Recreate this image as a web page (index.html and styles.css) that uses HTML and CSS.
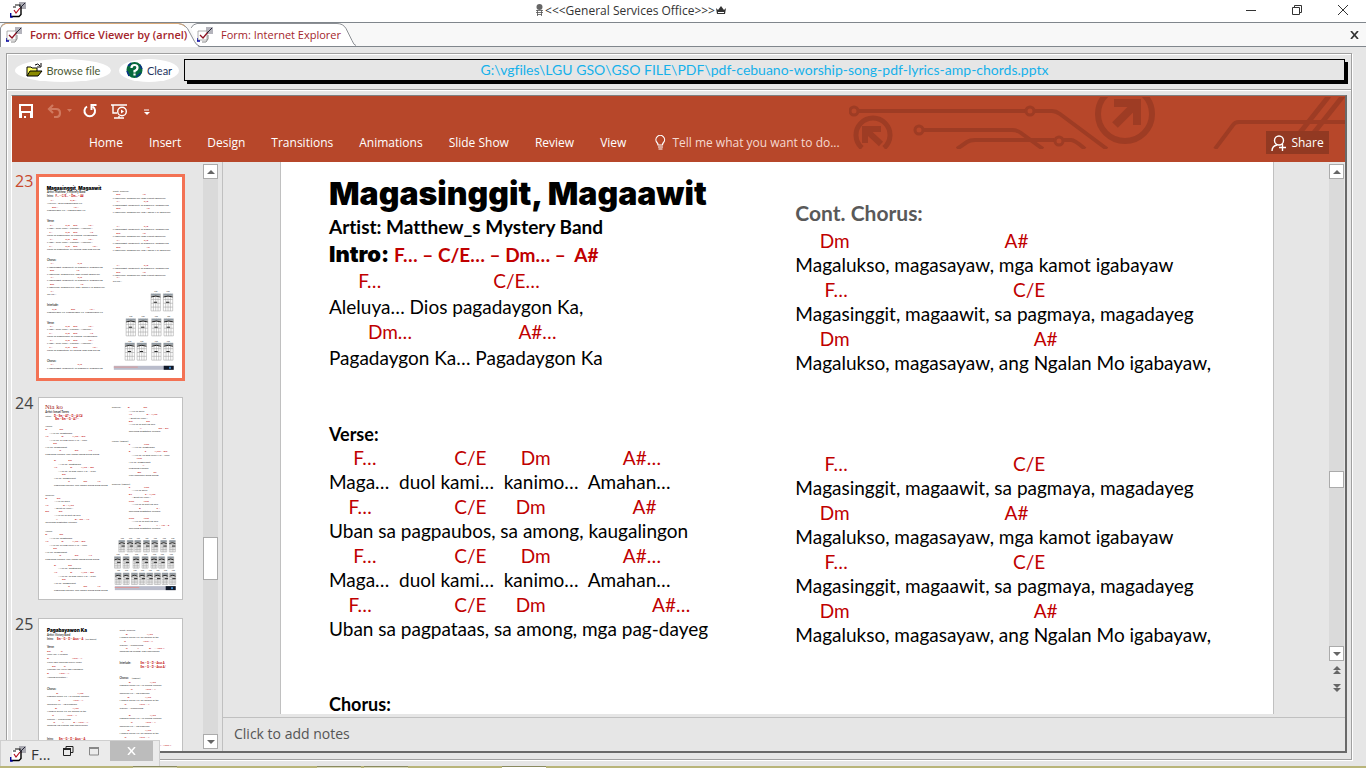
FILE: index.html
```html
<!DOCTYPE html>
<html lang="en">
<head>
    <meta charset="UTF-8">
    <meta name="viewport" content="width=device-width, initial-scale=1.0">
    <title>General Services Office</title>
    <link rel="stylesheet" href="styles.css">
</head>
<body>
    <svg width="0" height="0" class="defs">
        <symbol id="form-icon" viewBox="0 0 16 16">
            <path d="M9 0h7v7h-7z" fill="#b4b4bc"/>
            <path d="M1 4h9v9H1z" fill="#fff" stroke="#999" stroke-width=".8"/>
            <path d="M0 11v3h3" stroke="#00009c" stroke-width="1.4" fill="none"/>
            <path d="M5 15h4l2-3V8" stroke="#888" stroke-width="1" fill="none"/>
            <path d="M3 8l3 3 5-6" stroke="#8e1020" stroke-width="1.300" fill="none"/>
            <path d="M10 6l5-5" stroke="#223" stroke-width="1"/>
        </symbol>
        <symbol id="form-icon-dark" viewBox="0 0 16 16">
            <path d="M9 0h7v7h-7z" fill="#a8a8b0"/>
            <path d="M2 4h8v10H2z" fill="#fff"/>
            <path d="M5 3h5v2M3 5h3" stroke="#111" stroke-width="1.200" fill="none"/>
            <path d="M1 14.500h8l2-2V5" stroke="#000" stroke-width="1.400" fill="none"/>
            <path d="M.7 11v4h2" stroke="#00009c" stroke-width="1.400" fill="none"/>
            <path d="M4 8l2 3 4-5" stroke="#b01020" stroke-width="1.200" fill="none"/>
            <path d="M10 6l5-5" stroke="#223" stroke-width="1"/>
        </symbol>
    </svg>

    <header class="titlebar">
        <svg class="icon16"><use href="#form-icon-dark"/></svg>
        <h1>
            <svg width="9" height="12" viewBox="0 0 9 12"><circle cx="4.500" cy="3" r="3" fill="#666"/><path d="M1 6.500h7M1 8.500h7M2.500 6v6M6.500 6v6M2 10.500h5" stroke="#555" stroke-width=".8" fill="none"/></svg>
            <span>&lt;&lt;&lt;General Services Office&gt;&gt;&gt;</span>
            <svg width="10" height="9" viewBox="0 0 10 9"><path d="M0 2l2 2 3-4 3 4 2-2-1 6H1z" fill="#333"/><path d="M2 6.500h6" stroke="#fff"/></svg>
        </h1>
        <div class="win-buttons">
            <button aria-label="Minimize"><svg width="11" height="11"><path d="M0 5.500h10" stroke="#333"/></svg></button>
            <button aria-label="Restore"><svg width="11" height="11"><path d="M.5 2.500h7v7h-7zM2.500 2.500v-2h7v7h-2" stroke="#333" fill="none"/></svg></button>
            <button aria-label="Close"><svg width="11" height="11"><path d="M0 0l10 10M10 0L0 10" stroke="#333"/></svg></button>
        </div>
    </header>

    <nav class="doc-tabs">
        <a href="#" class="doc-tab active">
            <svg class="tab-shape" width="200" height="24"><path d="M0 24V4q1-3 5-3.500h173q6 .500 9 5l7 13q2 4 5 5.500z" fill="#fff"/><path d="M.5 24V5q1-4 5-4.500h173q6 .500 9 5l7 13q2 4 5 4.500" fill="none" stroke="#8c8f94"/><path d="M2 3.500q1-2.500 4-3h172q4 0 7 3" fill="none" stroke="#d8a878"/></svg>
            <svg class="icon16"><use href="#form-icon"/></svg>
            <span>Form: Office Viewer by (arnel)</span>
        </a>
        <a href="#" class="doc-tab">
            <svg class="tab-shape" width="166" height="24"><path d="M0 5q2-4 6-4.500h140q6 0 9 5l6 12q2 5 4 5.500H8z" fill="#fff"/><path d="M0 5q2-4 6-4.500h140q6 0 9 5l6 12q2 5 4 5" fill="none" stroke="#8c8f94"/></svg>
            <svg class="icon16"><use href="#form-icon"/></svg>
            <span>Form: Internet Explorer</span>
        </a>
        <button class="tab-close" aria-label="Close form"><svg width="9" height="8"><path d="M1 0l7 8M8 0L1 8" stroke="#333" stroke-width="1.700"/></svg></button>
    </nav>

    <main class="form">
        <section class="form-header">
            <button class="pill browse">
                <svg width="17" height="15" viewBox="0 0 17 15"><path d="M1 13V4h4l1 1h5v3" fill="#ffff66" stroke="#000"/><path d="M1 13l3-5h12l-4 5z" fill="#8a8a00" stroke="#000"/><path d="M9 2q3-2.500 5 1M15 0v4h-4" fill="none" stroke="#000"/></svg>
                <span>Browse file</span>
            </button>
            <button class="pill clear">
                <svg width="17" height="17" viewBox="0 0 17 17"><circle cx="8.500" cy="8" r="8" fill="#066a3c"/><path d="M2 4l3-3M1 9l2 5M10 15l5-4M14 3l2 4" stroke="#0a2f8a" stroke-width="1.500"/><path d="M5.500 6q0-3 3-3t3 2.500-3 3.500v1.500M8.500 11.500v2" stroke="#fff" stroke-width="2.200" fill="none"/></svg>
                <span>Clear</span>
            </button>
            <output class="path">G:\vgfiles\LGU GSO\GSO FILE\PDF\pdf-cebuano-worship-song-pdf-lyrics-amp-chords.pptx</output>
        </section>

        <section class="form-detail">
            <div class="office">
                <div class="ribbon">
                    <svg class="circuit" width="496" height="52" viewBox="0 0 496 52" fill="none" stroke="#9e3c24" stroke-width="4">
                        <circle cx="5" cy="14" r="4" stroke-width="3"/><path d="M9 14h168"/>
                        <circle cx="181" cy="14" r="4" stroke-width="3"/><path d="M185 14h18q4 0 8 3l47 35"/>
                        <circle cx="70" cy="33" r="4" stroke-width="3"/><path d="M74 33h89q5 0 9 3l22 16"/>
                        <path d="M108 52l10-7q3-2 8-2h79"/><circle cx="210" cy="44" r="4" stroke-width="3"/><path d="M214 43h8q4 0 14 9"/>
                        <path d="M13 51a17 17 0 1 1 22 0" stroke-width="5"/><path d="M16 46V32h16M17 33l15 14" stroke-width="6"/>
                        <circle cx="276" cy="17" r="27" stroke-width="6"/><path d="M265 6h23v22M287 7L266 28" stroke-width="8"/>
                        <path d="M366 52l18-24q2-3 6-3h106" /><path d="M480 -1L438 52M494 -1L452 52" stroke-width="5"/>
                    </svg>
                    <div class="quick">
                        <button aria-label="Save"><svg width="14" height="14"><path d="M0 0h14v14H0zM2 2v5h10V2zM3 9v5h2v-2h2v2h4V9z" fill="#fff" fill-rule="evenodd"/></svg></button>
                        <button aria-label="Undo" class="undo"><svg width="26" height="14" fill="none" stroke="#d0795f" stroke-width="2.200"><path d="M6 1L2 5l4 4M2 5h7q4 0 4 4t-4 4H7"/><path d="M20 5h5l-2.500 3z" fill="#d0795f" stroke="none"/></svg></button>
                        <button aria-label="Repeat"><svg width="14" height="14" fill="none" stroke="#fff" stroke-width="2"><path d="M4 2.500a5.300 5.300 0 1 0 5.500 0"/><path d="M8.500 6V1h5"/></svg></button>
                        <button aria-label="Start slide show" class="show"><svg width="17" height="15" fill="none" stroke="#fff" stroke-width="1.400"><path d="M0 1h16M2 1v8h4M3 14h10M8 12v2"/><circle cx="11" cy="7.500" r="4.300"/><path d="M10 5.500l3 2-3 2z" fill="#fff" stroke="none"/></svg></button>
                        <button aria-label="Customize" class="more"><svg width="6" height="7"><path d="M0 1h5" stroke="#fff"/><path d="M0 3h6L3 6z" fill="#fff"/></svg></button>
                    </div>
                    <div class="menu">
                        <button>Home</button>
                        <button>Insert</button>
                        <button>Design</button>
                        <button>Transitions</button>
                        <button>Animations</button>
                        <button>Slide Show</button>
                        <button>Review</button>
                        <button>View</button>
                        <button class="tell"><svg width="11" height="15" fill="none" stroke="#fff" stroke-width="1.200"><path d="M3 10Q3 8.500 2 7.500a4.300 4.300 0 1 1 6.500 0Q7.500 8.500 7.500 10zM3 12h5M3.500 14h4"/></svg>Tell me what you want to do...</button>
                        <button class="share"><svg width="16" height="16" fill="none" stroke="#fff" stroke-width="1.400"><circle cx="8" cy="5.500" r="4.500"/><path d="M1 16q0-5 5-6M8 12.500h7M11.500 9v7"/></svg>Share</button>
                    </div>
                </div>

                <div class="workspace">
                    <aside class="thumbs">
                        <a href="#" class="thumb selected"><b>23</b><svg id="thumb23" viewBox="117 36 430 603" height="201"></svg></a>
                        <a href="#" class="thumb"><b>24</b><svg id="thumb24" viewBox="117 39 430 603" height="201"></svg></a>
                        <a href="#" class="thumb"><b>25</b><svg id="thumb25" viewBox="117 56 430 603" height="201"></svg></a>
                    </aside>
                    <div class="scroll side-scroll">
                        <button aria-label="Scroll thumbnails up"><i class="up"></i></button>
                        <div class="track"><div class="knob"></div></div>
                        <button aria-label="Scroll thumbnails down"><i class="down"></i></button>
                    </div>

                    <div class="editor">
                        <div class="stage">
                            <article class="slide">
                                <div class="col first">
                                    <h2>Magasinggit, Magaawit</h2>
                                    <p class="artist">Artist: Matthew_s Mystery Band</p>
                                    <p class="intro"><strong>Intro:</strong> F… – C/E… – Dm… –  A#</p>
                                    <p class="chords wide">      F…                       C/E…</p>
                                    <p>Aleluya… Dios pagadaygon Ka,</p>
                                    <p class="chords wide">        Dm…                      A#…</p>
                                    <p class="wide">Pagadaygon Ka… Pagadaygon Ka</p>
                                    <h3>Verse:</h3>
                                    <p class="chords">     F…                C/E       Dm               A#…</p>
                                    <p>Maga…  duol kami…  kanimo…  Amahan…</p>
                                    <p class="chords">    F…                 C/E      Dm                  A#</p>
                                    <p>Uban sa pagpaubos, sa among, kaugalingon</p>
                                    <p class="chords">     F…                C/E       Dm               A#…</p>
                                    <p>Maga…  duol kami…  kanimo…  Amahan…</p>
                                    <p class="chords">    F…                 C/E      Dm                      A#…</p>
                                    <p>Uban sa pagpataas, sa among, mga pag-dayeg</p>
                                    <h3>Chorus:</h3>
                                </div>
                                <div class="col second">
                                    <h2>Cont. Chorus:</h2>
                                    <p class="chords">     Dm                                A#</p>
                                    <p>Magalukso, magasayaw, mga kamot igabayaw</p>
                                    <p class="chords">      F…                                  C/E</p>
                                    <p>Magasinggit, magaawit, sa pagmaya, magadayeg</p>
                                    <p class="chords">     Dm                                      A#</p>
                                    <p>Magalukso, magasayaw, ang Ngalan Mo igabayaw,</p>
                                    <p class="chords repeat">      F…                                  C/E</p>
                                    <p>Magasinggit, magaawit, sa pagmaya, magadayeg</p>
                                    <p class="chords">     Dm                                A#</p>
                                    <p>Magalukso, magasayaw, mga kamot igabayaw</p>
                                    <p class="chords">      F…                                  C/E</p>
                                    <p>Magasinggit, magaawit, sa pagmaya, magadayeg</p>
                                    <p class="chords">     Dm                                      A#</p>
                                    <p>Magalukso, magasayaw, ang Ngalan Mo igabayaw,</p>
                                </div>
                            </article>
                            <div class="scroll main-scroll">
                                <button aria-label="Scroll up"><i class="up"></i></button>
                                <div class="track"><div class="knob"></div></div>
                                <button aria-label="Scroll down"><i class="down"></i></button>
                                <button class="page" aria-label="Previous slide"><i class="up"></i><i class="up"></i></button>
                                <button class="page" aria-label="Next slide"><i class="down"></i><i class="down"></i></button>
                            </div>
                        </div>
                        <div class="notes">Click to add notes</div>
                    </div>
                </div>
            </div>
        </section>
    </main>

    <footer class="taskbar"><span></span><span class="pinned"></span><span></span><span class="current"></span></footer>

    <div class="mini-window">
        <svg class="icon16"><use href="#form-icon-dark"/></svg>
        <span>F...</span>
        <button aria-label="Restore window"><svg width="11" height="11"><path d="M.5 3h7v6.500h-7zM3 2.500v-2h7v6h-2" stroke="#222" fill="none"/><path d="M0 3h8" stroke="#222" stroke-width="2"/></svg></button>
        <button aria-label="Maximize window"><svg width="11" height="9"><path d="M.5 1h9v7h-9z" stroke="#888" fill="none"/><path d="M0 1h10" stroke="#888" stroke-width="2"/></svg></button>
        <button class="mini-close" aria-label="Close window"><svg width="9" height="8"><path d="M1 0l7 8M8 0L1 8" stroke="#fff" stroke-width="1.500"/></svg></button>
    </div>

    <script src="thumbs.js"></script>
</body>
</html>
```
FILE: styles.css
```css
* {
    box-sizing: border-box;
}
body {
    margin: 0;
    height: 100vh;
    display: flex;
    flex-direction: column;
    overflow: hidden;
    position: relative;
    background: #e6e6e6;
    color: #333;
    font: 12px "Open Sans", "Noto Sans", sans-serif;
}
button {
    border: none;
    background: none;
    padding: 0;
    margin: 0;
    font: inherit;
    color: inherit;
    display: flex;
    align-items: center;
    justify-content: center;
}
a {
    color: inherit;
    text-decoration: none;
}
h1, h2, h3, p {
    margin: 0;
}
svg {
    display: block;
    flex: none;
}
.defs {
    position: absolute;
}
.icon16 {
    width: 16px;
    height: 16px;
}

/* title bar */
.titlebar {
    height: 22px;
    flex: none;
    display: grid;
    grid-template-columns: 1fr auto 1fr;
    align-items: center;
    background: #fff;
    padding: 0 17px 2px 10px;
}
.titlebar h1 {
    display: flex;
    align-items: center;
    gap: 1px;
    margin-right: 98px;
    font-size: 12px;
    font-weight: normal;
}
.win-buttons {
    display: flex;
    justify-content: flex-end;
    gap: 35px;
}

/* form tabs */
.doc-tabs {
    height: 25px;
    flex: none;
    display: flex;
    background: #f8f8f8;
    border-top: 1px solid #80868c;
    border-bottom: 1px solid #80868c;
    color: #a4262c;
    font-size: 11px;
}
.doc-tab {
    position: relative;
    z-index: 0;
    display: flex;
    align-items: center;
    gap: 8px;
    width: 191px;
    height: 23px;
    padding-left: 6px;
    white-space: nowrap;
}
.doc-tab.active {
    z-index: 1;
    font-weight: 600;
}
.tab-shape {
    position: absolute;
    left: 0;
    top: 0;
    z-index: -1;
}
.tab-close {
    margin-left: auto;
    padding-right: 7px;
}

/* form frame */
.form {
    flex: 1;
    min-height: 0;
    display: flex;
    flex-direction: column;
    margin: 6px 14px 6px 6px;
    border: 1px solid #a0a0a0;
    box-shadow: 1px 1px 0 #fff, inset 1px 1px 0 #fff;
}
.form-header {
    height: 36px;
    flex: none;
    display: flex;
    align-items: flex-start;
    gap: 8px;
    padding: 5px 6px 0 8px;
    border-bottom: 1px solid #a0a0a0;
}
.pill {
    height: 23px;
    border-radius: 50%;
    background: #fff;
    gap: 4px;
    font-family: Lato, sans-serif;
    font-size: 11px;
    font-variant-ligatures: none;
}
.browse {
    width: 96px;
    color: #4b5a35;
}
.clear {
    width: 60px;
    margin-right: -3px;
    color: #23345e;
}
.path {
    flex: 1;
    height: 22px;
    border: 1px solid #000;
    box-shadow: 3px 3px 0 #000;
    color: #16b1ea;
    font: 14px/19px Lato, sans-serif;
    font-variant-ligatures: none;
    text-align: center;
    white-space: nowrap;
    overflow: hidden;
}
.form-detail {
    flex: 1;
    min-height: 0;
    display: flex;
    padding: 3px 4px 6px 3px;
    border-top: 1px solid #fff;
}

/* presentation viewer */
.office {
    flex: 1;
    min-width: 0;
    display: flex;
    flex-direction: column;
    border: 2px solid #696969;
    border-top: 1px solid #808080;
    border-left: 1px solid #fff;
    margin: 1px 0 0 1px;
}
.ribbon {
    position: relative;
    height: 66px;
    flex: none;
    background: #b7472a;
    color: #fff;
    overflow: hidden;
}
.circuit {
    position: absolute;
    right: 0;
    top: 1px;
}
.quick {
    display: flex;
    align-items: center;
    height: 30px;
    padding-left: 7px;
}
.undo {
    margin-left: 14px;
}
.quick .undo + button {
    margin-left: 10px;
}
.show {
    margin-left: 14px;
}
.more {
    margin: 3px 0 0 16px;
}
.menu {
    position: relative;
    display: flex;
    align-items: center;
    gap: 26px;
    height: 33px;
    padding-left: 77px;
    white-space: nowrap;
}
.tell {
    gap: 6px;
    margin-left: 3px;
    color: #f6d9d0;
}
.share {
    width: 63px;
    height: 23px;
    gap: 4px;
    margin-left: auto;
    margin-right: 16px;
    background: #923922;
}
.workspace {
    flex: 1;
    min-height: 0;
    display: flex;
}
.thumbs {
    width: 191px;
    flex: none;
    display: flex;
    flex-direction: column;
    gap: 18px;
    padding: 12px 0 0 3px;
    overflow: hidden;
}
.thumb {
    display: flex;
    align-items: flex-start;
    flex: none;
}
.thumb b {
    width: 23px;
    font-size: 16px;
    line-height: 12px;
    font-weight: normal;
    color: #444;
}
.thumb svg {
    width: 145px;
    height: 203px;
    background: #fff;
    border: 1px solid #c0c0c0;
}
.thumb.selected b {
    line-height: 14px;
    color: #c8482c;
}
.thumb.selected svg {
    width: 149px;
    height: 207px;
    margin: 0 0 -2px -2px;
    border: 3px solid #f37254;
}
.thumb text {
    font: 8px Lato, sans-serif;
    fill: #333;
    white-space: pre;
}
.thumb .red {
    fill: #c00000;
}
.thumb .head {
    font: 900 14px Inter, sans-serif;
    fill: #000;
}
.thumb .serif {
    font: 20px "Liberation Serif", serif;
    fill: #a02020;
}
.thumb .bold {
    font-weight: bold;
}
.thumb .label {
    font-size: 7px;
}

/* scrollbars */
.scroll {
    width: 15px;
    flex: none;
    display: flex;
    flex-direction: column;
}
.scroll button {
    height: 15px;
    flex: none;
    border: 1px solid #ababab;
    background: #fff;
}
.scroll .track {
    flex: 1;
    display: flex;
    flex-direction: column;
    background: #dadada;
}
.knob {
    border: 1px solid #ababab;
    background: #fff;
}
.side-scroll {
    padding: 2px 0;
}
.side-scroll .knob {
    height: 43px;
    margin-top: 358px;
}
.main-scroll {
    padding: 2px 0 17px;
}
.main-scroll .knob {
    height: 17px;
    margin-top: 292px;
}
.scroll i {
    border: 4px solid transparent;
}
.scroll .up {
    border-top: none;
    border-bottom-color: #666;
}
.scroll .down {
    border-bottom: none;
    border-top-color: #666;
}
.scroll .page {
    flex-direction: column;
    height: 18px;
    border: none;
    background: none;
}

/* slide */
.editor {
    flex: 1;
    min-width: 0;
    display: flex;
    flex-direction: column;
    margin-left: 4px;
    border-left: 1px solid #c0c0c0;
}
.stage {
    flex: 1;
    min-height: 0;
    display: flex;
    gap: 55px;
    padding: 0 1px 3px 57px;
}
.slide {
    flex: 1;
    min-width: 0;
    display: grid;
    grid-template-columns: 49.4% 50.6%;
    padding-left: 48px;
    overflow: hidden;
    background: #fff;
    border: 1px solid #c0c0c0;
    border-width: 0 1px;
    color: #000;
    font: 19px/24px Lato, sans-serif;
    font-variant-ligatures: none;
}
.slide p {
    height: 25px;
    white-space: pre;
}
.slide .chords {
    height: 24px;
    color: #c00000;
}
.first {
    padding-top: 12px;
}
.first h2 {
    height: 41px;
    font: 900 32px/40px Inter, "Lato Black", sans-serif;
}
.slide .artist {
    height: 26px;
    font-weight: bold;
}
.slide .intro {
    height: 28px;
    line-height: 28px;
    color: #c00000;
    font-weight: bold;
}
.intro strong {
    color: #000;
    font: 900 22px Inter, "Lato Black", sans-serif;
}
.slide .wide {
    height: 26px;
}
.slide h3 {
    height: 24px;
    margin-top: 50px;
    font-size: 18px;
}
.second {
    padding-top: 39px;
}
.second h2 {
    height: 28px;
    color: #595959;
    font-size: 21px;
}
.slide .repeat {
    margin-top: 76px;
}
.notes {
    height: 34px;
    flex: none;
    padding-left: 11px;
    border-top: 1px solid #c0c0c0;
    color: #555;
    font-size: 14px;
    line-height: 32px;
}

/* bottom edge */
.taskbar {
    display: flex;
    gap: 3px;
    height: 2px;
    flex: none;
    padding-left: 133px;
    background: #b9b57a;
}
.taskbar span {
    width: 44px;
    background: #d8d8b8;
    border-top: 1px solid #8a8a60;
}
.taskbar .pinned {
    margin-left: 137px;
}
.taskbar .current {
    margin-left: 91px;
    background: #fff;
}
.mini-window {
    position: absolute;
    left: 0;
    bottom: 2px;
    width: 160px;
    height: 26px;
    display: flex;
    align-items: center;
    padding-left: 9px;
    background: #ebebeb;
    border: 1px solid #cfcfcf;
    border-bottom: none;
    font-size: 15px;
}
.mini-window span {
    width: 34px;
    padding-left: 5px;
}
.mini-window button {
    width: 27px;
    height: 20px;
    align-self: flex-start;
    padding-right: 6px;
}
.mini-window .mini-close {
    width: 45px;
    padding-right: 0;
    margin-left: auto;
    margin-right: 6px;
    background: #bcbcbc;
}
```
FILE: thumbs.js
```js
const NS = "http://www.w3.org/2000/svg";

function add(svg, tag, attrs, text) {
    const el = document.createElementNS(NS, tag);
    for (const key in attrs) el.setAttribute(key, attrs[key]);
    if (text) el.textContent = text;
    svg.appendChild(el);
}

// each row: x, middle of the line, text, class
function drawRows(svg, rows) {
    rows.forEach(r => add(svg, "text", { x: r[0], y: r[1] + 3, class: r[3] || "" }, r[2]));
}

function drawChordBox(svg, x, y, w, h) {
    add(svg, "rect", { x: x, y: y, width: w, height: 6, fill: "#8d9aa5" });
    let d = "";
    for (let i = 0; i <= 4; i++) d += `M${x + i * w / 4} ${y}v${h}`;
    for (let i = 0; i <= 4; i++) d += `M${x} ${y + 6 + i * (h - 6) / 4}h${w}`;
    add(svg, "path", { d: d, stroke: "#999", "stroke-width": 1.5, fill: "none" });
    add(svg, "path", { d: `M${x} ${y + 10}q${w / 2}-5 ${w} 0M${x + 8} ${y + h / 2}h10`, stroke: "#222", "stroke-width": 3, fill: "none" });
    add(svg, "text", { x: x + w / 3, y: y - 4, class: "label" }, "Fm");
}

function drawBanner(svg, x, y, w) {
    add(svg, "rect", { x: x, y: y, width: w, height: 12, fill: "#b9bccb" });
    add(svg, "path", { d: `M${x} ${y + 4}h${w * .4}`, stroke: "#d99", "stroke-width": 3 });
    add(svg, "rect", { x: x + w - 30, y: y, width: 30, height: 12, fill: "#101828" });
    add(svg, "rect", { x: x + w - 14, y: y + 3, width: 6, height: 6, fill: "#3b82c4" });
}

const t23 = document.getElementById("thumb23");
const praise = "Magasinggit, magaawit, sa pagmaya, magadayeg";
const dance = "Magalukso, magasayaw, mga kamot igabayaw";
const danceEnd = "Magalukso, magasayaw, ang Ngalan Mo igabayaw,";
drawRows(t23, [
    [140, 70, "Magasinggit, Magaawit", "head"],
    [141, 81, "Artist: Matthew_s Mystery Band", "bold"],
    [141, 93, "Intro:", "bold"], [167, 93, "F… – C/E… – Dm… – A#", "red bold"],
    [152, 104, "F…", "red"], [210, 104, "C/E…", "red"],
    [141, 115, "Aleluya… Dios pagadaygon Ka,"],
    [156, 126, "Dm…", "red"], [221, 126, "A#…", "red"],
    [141, 135, "Pagadaygon Ka… Pagadaygon Ka"],
    [141, 168, "Verse:", "bold"],
    [141, 285, "Chorus:", "bold"],
    [152, 295, "F…", "red"], [233, 295, "C/E", "red"], [141, 306, praise],
    [150, 316, "Dm", "red"], [229, 316, "A#", "red"], [141, 327, dance],
    [152, 336, "F…", "red"], [233, 336, "C/E", "red"], [141, 346, praise],
    [150, 357, "Dm", "red"], [241, 357, "A#", "red"], [141, 367, danceEnd],
    [152, 379, "F…", "red"], [141, 387, "Oh ho…"],
    [141, 420, "Interlude:", "bold"],
    [156, 432, "C/E", "red"], [213, 432, "Dm", "red"], [269, 432, "A#…", "red"],
    [141, 441, "Pagadaygon Ka, Pagadaygon Ka, Pagadaygon Ka"],
    [141, 474, "Verse:", "bold"],
    [141, 588, "Chorus:", "bold"],
    [152, 597, "F…", "red"], [233, 597, "C/E", "red"], [141, 609, praise],
    [339, 77, "Cont. Chorus:"],
    [349, 87, "Dm", "red"], [428, 87, "A#", "red"], [339, 99, dance],
    [351, 108, "F…", "red"], [432, 108, "C/E", "red"], [339, 120, praise],
    [349, 129, "Dm", "red"], [440, 129, "A#", "red"], [339, 141, danceEnd],
    [351, 183, "F…", "red"], [432, 183, "C/E", "red"], [339, 192, praise],
    [349, 204, "Dm", "red"], [428, 204, "A#", "red"], [339, 213, dance],
    [351, 225, "F…", "red"], [432, 225, "C/E", "red"], [339, 235, praise],
    [349, 246, "Dm", "red"], [440, 246, "A#", "red"], [339, 255, danceEnd],
    [351, 300, "F…", "red"], [432, 300, "C/E", "red"], [339, 309, praise],
    [349, 320, "Dm", "red"], [428, 320, "A#", "red"], [339, 330, dance],
    [351, 337, "F…", "red"], [339, 348, "Oh ho…"]
]);
[180, 484].forEach(y => {
    drawRows(t23, [
        [150, y, "F…", "red"], [196, y, "C/E", "red"], [220, y, "Dm", "red"], [265, y, "A#…", "red"],
        [141, y + 9, "Maga… duol kami… kanimo… Amahan…"],
        [148, y + 21, "F…", "red"], [196, y + 21, "C/E", "red"], [220, y + 21, "Dm", "red"], [270, y + 21, "A#", "red"],
        [141, y + 30, "Uban sa pagpaubos, sa among, kaugalingon"],
        [150, y + 42, "F…", "red"], [196, y + 42, "C/E", "red"], [220, y + 42, "Dm", "red"], [265, y + 42, "A#…", "red"],
        [141, y + 51, "Maga… duol kami… kanimo… Amahan…"],
        [148, y + 63, "F…", "red"], [196, y + 63, "C/E", "red"], [220, y + 63, "Dm", "red"], [278, y + 63, "A#…", "red"],
        [141, y + 72, "Uban sa pagpataas, sa among, mga pag-dayeg"]
    ]);
});
[[454, 386], [491, 386], [379, 461], [416, 461], [456, 461], [493, 461], [376, 534], [412, 534], [456, 534], [492, 534]]
    .forEach(b => drawChordBox(t23, b[0], b[1], 28, 52));
drawBanner(t23, 342, 603, 180);

const t24 = document.getElementById("thumb24");
drawRows(t24, [
    [135, 69, "Nia ko", "serif"],
    [136, 81, "Artist: Ismael Torres", "bold"],
    [136, 93, "Intro:"], [162, 93, "D – Em – A7 – D – A/C#", "red bold"],
    [166, 102, "Bm – Em – G – A7 –", "red bold"],
    [136, 330, "Chorus:"],
    [136, 339, "D              Em", "red"], [163, 348, "…Nia ko paila"],
    [136, 360, "A7                     D – A/C#", "red"], [163, 369, "…Buot ko ikaw…"],
    [136, 378, "Bm              Em", "red"], [163, 390, "…Nia ko sa pait ug sala"],
    [168, 401, "A                         D – Em – A7", "red"], [136, 411, "Tawhang magtotoo kanimo."],
    [336, 66, "Chorus:"], [384, 66, "D                    Em", "red"],
    [387, 78, "…Nia ko paila"], [387, 87, "A7                     D – A/C#", "red"],
    [387, 97, "…Buot ko ikaw…"], [387, 108, "Bm                    Em", "red"],
    [387, 117, "…Nia ko sa pait ug sala"], [420, 129, "A                         Em – D7", "red"],
    [387, 139, "Tawhang magtotoo kanimo."],
    [336, 168, "Verse: (higher)"],
    [387, 177, "E                    F#m", "red"], [396, 186, "…Nia ko, magtabibo"],
    [387, 199, "B                     E            A/C# – Bm", "red"], [396, 210, "…Nia ko, sa pag-uswil Mo – ikaw"],
    [411, 219, "F#m", "red"], [387, 231, "Nia ko, magpaabot"],
    [428, 240, "A", "red"], [387, 249, "Paglaong kanimo"],
    [413, 261, "Bm                  E7", "red"], [387, 270, "Kon lampamo pang mong"],
    [336, 297, "Chorus: (higher)"],
    [387, 306, "E                    F#m", "red"], [396, 315, "…Nia ko paila"],
    [387, 327, "B7                   E – A/C#", "red"], [396, 336, "…Buot ko ikaw…"],
    [387, 348, "C#m              F#m", "red"], [396, 357, "…Nia ko sa pait ug sala"],
    [418, 369, "B                       E –", "red"], [387, 378, "Tawhang magtotoo kanimo."],
    [387, 399, "C#m              F#m", "red"], [396, 408, "…Nia ko sa pait ug sala"],
    [418, 420, "B                       A – Am – E", "red"], [387, 429, "Tawhang magtotoo kanimo."]
]);
[123, 438].forEach(y => {
    drawRows(t24, [[136, y, "Verse:"]]);
    [[136, y + 9], [162, y + 102]].forEach(v => {
        drawRows(t24, [
            [v[0], v[1], "D                  Em", "red"], [v[0] + 12, v[1] + 11, "…Nia ko, magtabibo"],
            [v[0], v[1] + 21, "A7                   D             A/C# – Bm", "red"], [v[0] + 12, v[1] + 33, "…Nia ko, sa pag-uswil Mo – ikaw"],
            [v[0] + 24, v[1] + 42, "Em", "red"], [v[0], v[1] + 54, "Nia ko, magpaabot"],
            [v[0] + 42, v[1] + 63, "G                    Em               A7", "red"], [v[0], v[1] + 75, "Paglaong kanimo, kon lampa mong pang mong"]
        ]);
    });
});
[[357, 382, 405, 431, 456, 483, 509], [344, 370, 400, 427, 454, 477, 504], [346, 370, 395, 418, 441, 464, 487, 510]]
    .forEach((row, i) => row.forEach(x => drawChordBox(t24, x, 466 + i * 49, 18, 35)));
drawBanner(t24, 345, 604, 183);

const t25 = document.getElementById("thumb25");
drawRows(t25, [
    [141, 90, "Pagabayawon Ka", "head"],
    [141, 102, "Artist: Victory Band", "bold"],
    [141, 114, "Intro:", "bold"], [171, 114, "Em – G – D – Asus – A", "red bold"], [256, 114, "(x2 times)"],
    [141, 141, "Verse:", "bold"],
    [141, 153, "Em               G", "red"], [141, 162, "Ikaw lan, Malaban"],
    [141, 174, "D                                  Asus – A", "red"], [141, 186, "Kayo nga kanhing wala'y kapu"],
    [156, 198, "Em            G", "red"], [141, 207, "Kanimo lan, kayo nga kasingkin"],
    [141, 219, "D               Asus – A", "red"], [141, 231, "Among buhaton…"],
    [141, 267, "Chorus:", "bold"],
    [141, 417, "Intro:", "bold"], [177, 417, "Em – G – D – Asus – A", "red bold"],
    [359, 87, "Cont. Chorus:"],
    [378, 99, "D                            A/C#", "red"], [359, 108, "Hangyo pa'no Ka, on madan di tin"],
    [373, 120, "G                         Asus – A", "red"], [359, 132, "Tibuok – kinabuhing"],
    [378, 142, "G              A               D     – Asus A", "red"], [359, 153, "Tanding ug kamog, sag kasaulohon"],
    [359, 189, "Interlude:", "bold"], [422, 189, "Em – G – D – Asus A", "red bold"],
    [422, 201, "Em – G – D – Asus A/", "red bold"],
    [359, 234, "Chorus:", "bold"], [396, 234, "(higher)"],
    [444, 435, "G             D – Asus A", "red"]
]);
[[141, 279], [359, 246], [359, 345]].forEach(v => {
    drawRows(t25, [
        [v[0] + 28, v[1], "D                            A/C#", "red"], [v[0], v[1] + 9, "Pagabayawon Ka, Nfi sinang kahoon"],
        [v[0] + 34, v[1] + 20, "G                   Asus – A", "red"], [v[0], v[1] + 32, "Taaloron Ka – ug sindaron"],
        [v[0] + 24, v[1] + 43, "D                       A/C#", "red"], [v[0], v[1] + 53, "Hangyo pa'no Ka, on madan di tin"],
        [v[0] + 15, v[1] + 65, "G                   Asus – A", "red"], [v[0], v[1] + 76, "Tibuok – kinabuhing"]
    ]);
});
drawRows(t25, [[160, 364, "G          A              D – Asus – A", "red"], [141, 375, "Tanding, ug kamog, sag kasaulohon"]]);
```
